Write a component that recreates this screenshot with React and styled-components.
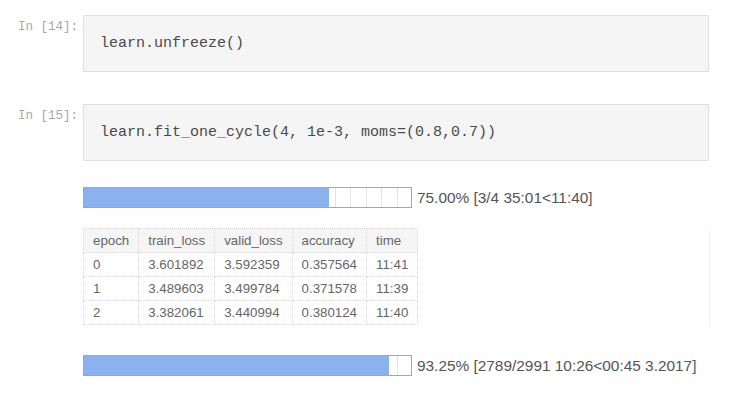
import React from 'react';
import styled, { createGlobalStyle } from 'styled-components';

const cells = [
  { n: 14, code: 'learn.unfreeze()' },
  { n: 15, code: 'learn.fit_one_cycle(4, 1e-3, moms=(0.8,0.7))' },
];

const rows = [
  ['0', '3.601892', '3.592359', '0.357564', '11:41'],
  ['1', '3.489603', '3.499784', '0.371578', '11:39'],
  ['2', '3.382061', '3.440994', '0.380124', '11:40'],
];

const Notebook = () => {
  return (
    <Page>
      <GlobalStyle />
      {cells.map((c) => (
        <CellRow key={c.n}>
          <Prompt>In [{c.n}]:</Prompt>
          <CodeBox>{c.code}</CodeBox>
        </CellRow>
      ))}

      <Output>
        <ProgressLine>
          <Track>
            <Fill style={{ width: '75%' }} />
          </Track>
          <ProgressText>75.00% [3/4 35:01&lt;11:40]</ProgressText>
        </ProgressLine>

        <TableWrap>
          <Table>
            <thead>
              <tr>
                <Th>epoch</Th>
                <Th>train_loss</Th>
                <Th>valid_loss</Th>
                <Th>accuracy</Th>
                <Th>time</Th>
              </tr>
            </thead>
            <tbody>
              {rows.map((r) => (
                <tr key={r[0]}>
                  {r.map((v, i) => (
                    <Td key={i}>{v}</Td>
                  ))}
                </tr>
              ))}
            </tbody>
          </Table>
        </TableWrap>

        <ProgressLine $gap={30}>
          <Track>
            <Fill style={{ width: '93.25%' }} />
          </Track>
          <ProgressText>93.25% [2789/2991 10:26&lt;00:45 3.2017]</ProgressText>
        </ProgressLine>
      </Output>
    </Page>
  );
};

const GlobalStyle = createGlobalStyle`
  body {
    margin: 0;
    background: #ffffff;
    font-family: "Liberation Sans", Arial, sans-serif;
  }
`;

const Page = styled.div`
  width: 738px;
  height: 402px;
  padding-top: 15px;
  box-sizing: border-box;
  overflow: hidden;
`;

const CellRow = styled.div`
  display: flex;
  align-items: flex-start;
  margin-bottom: 32px;
`;

const Prompt = styled.div`
  width: 78px;
  padding-right: 5px;
  padding-top: 5px;
  text-align: right;
  font-family: "Liberation Mono", monospace;
  font-size: 12.5px;
  line-height: 14px;
  color: #a8a8a8;
  box-sizing: content-box;
  flex: none;
`;

const CodeBox = styled.div`
  width: 626px;
  height: 57px;
  box-sizing: border-box;
  padding: 0 16px;
  display: flex;
  align-items: center;
  background: #f5f5f5;
  border: 1px solid #e0e0e0;
  font-family: "Liberation Mono", monospace;
  font-size: 15px;
  color: #4a4a4a;
  white-space: pre;
`;

const Output = styled.div`
  margin-left: 83px;
  margin-top: -6px;
`;

const ProgressLine = styled.div`
  display: flex;
  align-items: center;
  height: 21px;
  margin-top: ${(p) => p.$gap || 0}px;
`;

const Track = styled.div`
  width: 329px;
  height: 21px;
  box-sizing: border-box;
  border: 1px solid #a6a6a6;
  background-color: #ffffff;
  background-image: repeating-linear-gradient(
    to right,
    transparent 0,
    transparent 14.5px,
    #e4e4e4 14.5px,
    #e4e4e4 15.5px
  );
  background-position: 4px 0;
  flex: none;
`;

const Fill = styled.div`
  height: 100%;
  background: #8ab2ee;
`;

const ProgressText = styled.span`
  margin-left: 5px;
  font-size: 15.4px;
  color: #555555;
  white-space: nowrap;
`;

const TableWrap = styled.div`
  width: 626px;
  margin-top: 20px;
  border-right: 1px dotted #e2e2e2;
`;

const Table = styled.table`
  border-collapse: collapse;
  font-size: 13.3px;
  color: #666666;
`;

const Th = styled.th`
  height: 24px;
  padding: 0 9px;
  text-align: left;
  font-weight: normal;
  background: #f5f5f5;
  border: 1px dotted #d9d9d9;
  box-sizing: border-box;
`;

const Td = styled.td`
  height: 24px;
  padding: 0 9px;
  text-align: left;
  border: 1px dotted #d9d9d9;
  box-sizing: border-box;
`;

export default Notebook;
